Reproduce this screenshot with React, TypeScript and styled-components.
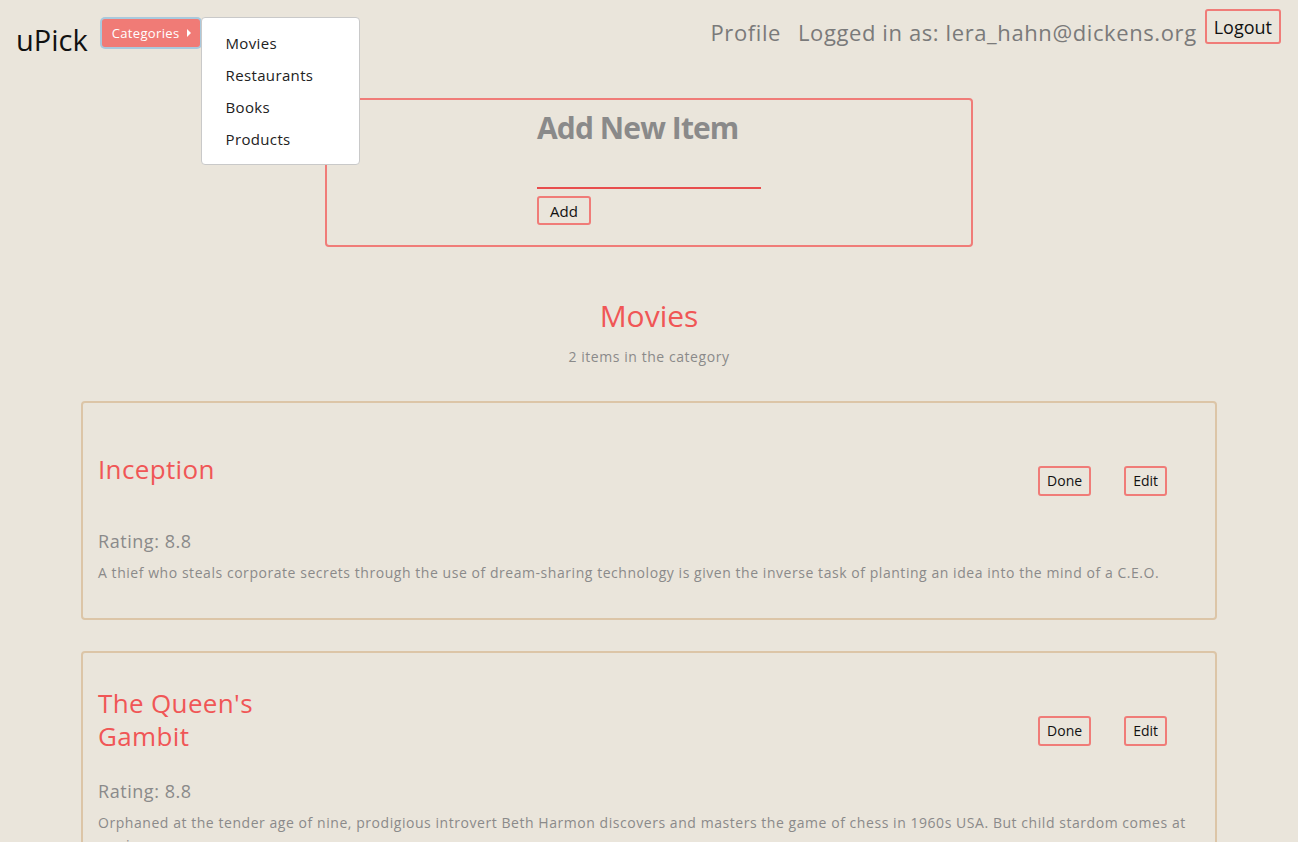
import React from "react";
import styled, { createGlobalStyle } from "styled-components";

const FONT = `"Open Sans", "Liberation Sans", Arial, sans-serif`;

const GlobalStyle = createGlobalStyle`
  html, body {
    margin: 0;
    padding: 0;
    background: #eae5db;
    font-family: ${FONT};
  }
  * { box-sizing: border-box; }
`;

const Page = styled.div`
  min-height: 842px;
  background: #eae5db;
  overflow: hidden;
`;

const NavBar = styled.nav`
  display: flex;
  align-items: flex-start;
  padding: 9px 17px 0 16px;
  height: 60px;
`;

const Brand = styled.div`
  font-size: 29px;
  color: #111;
  line-height: 32px;
  margin-top: 15px;
`;

const DropWrap = styled.div`
  position: relative;
  margin-left: 14px;
  margin-top: 10px;
`;

const CategoryButton = styled.button`
  display: flex;
  align-items: center;
  gap: 7px;
  height: 28px;
  padding: 0 9px 0 10px;
  background: #f07b76;
  color: #fff;
  border: none;
  border-radius: 3px;
  font-family: ${FONT};
  font-size: 13px;
  letter-spacing: 0.35px;
  box-shadow: 0 0 0 2px #a9c9dd;
  cursor: pointer;
`;

const Caret = styled.span`
  width: 0;
  height: 0;
  border-top: 4px solid transparent;
  border-bottom: 4px solid transparent;
  border-left: 4px solid #fff;
`;

const Menu = styled.ul`
  position: absolute;
  left: calc(100% + 1px);
  top: -2px;
  width: 159px;
  margin: 0;
  padding: 9px 0 9px;
  list-style: none;
  background: #fff;
  border: 1px solid #c9c9c9;
  border-radius: 4px;
  z-index: 5;
`;

const MenuItem = styled.li`
  padding: 0 24px;
  height: 32px;
  line-height: 32px;
  font-size: 15px;
  letter-spacing: 0.36px;
  color: #222;
`;

const Spacer = styled.div`
  flex: 1;
`;

const NavText = styled.span`
  font-size: 22px;
  color: #7a7a7a;
  line-height: 30px;
  margin-top: 8px;
  margin-right: 17px;
  letter-spacing: 0.6px;
  white-space: nowrap;
`;

const OutlineButton = styled.button<{ $size?: number }>`
  background: transparent;
  border: 2px solid #f07c78;
  border-radius: 3px;
  color: #111;
  font-family: ${FONT};
  font-size: ${(p) => p.$size ?? 14}px;
  padding: 0 7px;
  height: ${(p) => (p.$size && p.$size > 16 ? 35 : 30)}px;
  cursor: pointer;
  white-space: nowrap;
`;

const LogoutButton = styled(OutlineButton)`
  margin-left: -9px;
  padding: 0 7px;
`;

const AddBox = styled.section`
  width: 648px;
  margin: 38px auto 0;
  border: 2px solid #f07c78;
  border-radius: 4px;
  padding: 8px 0 20px 210px;
`;

const AddTitle = styled.h2`
  margin: 0;
  font-size: 30px;
  font-weight: 700;
  color: #8a8a8a;
  line-height: 40px;
  letter-spacing: -0.9px;
`;

const AddInput = styled.input`
  display: block;
  width: 224px;
  margin-top: 13px;
  height: 28px;
  background: transparent;
  border: none;
  border-bottom: 2px solid #e84d4d;
  outline: none;
  font-family: ${FONT};
  font-size: 15px;
`;

const AddButton = styled(OutlineButton)`
  margin-top: 7px;
  height: 29px;
  padding: 0 11px;
  font-size: 15px;
`;

const CategoryHeader = styled.header`
  text-align: center;
  margin-top: 49px;
`;

const CategoryTitle = styled.h1`
  margin: 0;
  font-size: 30px;
  font-weight: 400;
  color: #f05656;
  line-height: 40px;
`;

const CategoryCount = styled.p`
  margin: 11px 0 0;
  font-size: 14px;
  letter-spacing: 0.56px;
  color: #8a8a8a;
  line-height: 20px;
`;

const CardList = styled.div`
  width: 1136px;
  margin: 34px auto 0;
  display: flex;
  flex-direction: column;
  gap: 31px;
`;

const Card = styled.article`
  border: 2px solid #dcc5a7;
  border-radius: 4px;
  padding: 33px 20px 34px 15px;
`;

const CardTop = styled.div`
  display: flex;
  align-items: center;
  height: 89px;
`;

const ItemTitle = styled.h3`
  width: 190px;
  margin: 0 0 22px;
  font-size: 26px;
  font-weight: 400;
  line-height: 33px;
  letter-spacing: 0.35px;
  color: #f05656;
`;

const Actions = styled.div`
  margin-left: auto;
  margin-right: 28px;
  display: flex;
  gap: 33px;
`;

const Rating = styled.p`
  margin: 4px 0 0;
  font-size: 18px;
  line-height: 24px;
  letter-spacing: 0.55px;
  color: #8a8a8a;
`;

const Description = styled.p`
  margin: 9px 0 0;
  font-size: 14px;
  line-height: 22px;
  letter-spacing: 0.55px;
  color: #8a8a8a;
`;

const items = [
  {
    title: "Inception",
    rating: "8.8",
    description:
      "A thief who steals corporate secrets through the use of dream-sharing technology is given the inverse task of planting an idea into the mind of a C.E.O.",
  },
  {
    title: "The Queen's Gambit",
    rating: "8.8",
    description:
      "Orphaned at the tender age of nine, prodigious introvert Beth Harmon discovers and masters the game of chess in 1960s USA. But child stardom comes at a price.",
  },
];

export default function App() {
  return (
    <Page>
      <GlobalStyle />
      <NavBar>
        <Brand>uPick</Brand>
        <DropWrap>
          <CategoryButton>
            Categories <Caret />
          </CategoryButton>
          <Menu>
            <MenuItem>Movies</MenuItem>
            <MenuItem>Restaurants</MenuItem>
            <MenuItem>Books</MenuItem>
            <MenuItem>Products</MenuItem>
          </Menu>
        </DropWrap>
        <Spacer />
        <NavText>Profile</NavText>
        <NavText>Logged in as: lera_hahn@dickens.org</NavText>
        <LogoutButton $size={18}>Logout</LogoutButton>
      </NavBar>

      <AddBox>
        <AddTitle>Add New Item</AddTitle>
        <AddInput aria-label="New item" />
        <AddButton>Add</AddButton>
      </AddBox>

      <CategoryHeader>
        <CategoryTitle>Movies</CategoryTitle>
        <CategoryCount>2 items in the category</CategoryCount>
      </CategoryHeader>

      <CardList>
        {items.map((it) => (
          <Card key={it.title}>
            <CardTop>
              <ItemTitle>{it.title}</ItemTitle>
              <Actions>
                <OutlineButton>Done</OutlineButton>
                <OutlineButton>Edit</OutlineButton>
              </Actions>
            </CardTop>
            <Rating>Rating: {it.rating}</Rating>
            <Description>{it.description}</Description>
          </Card>
        ))}
      </CardList>
    </Page>
  );
}
